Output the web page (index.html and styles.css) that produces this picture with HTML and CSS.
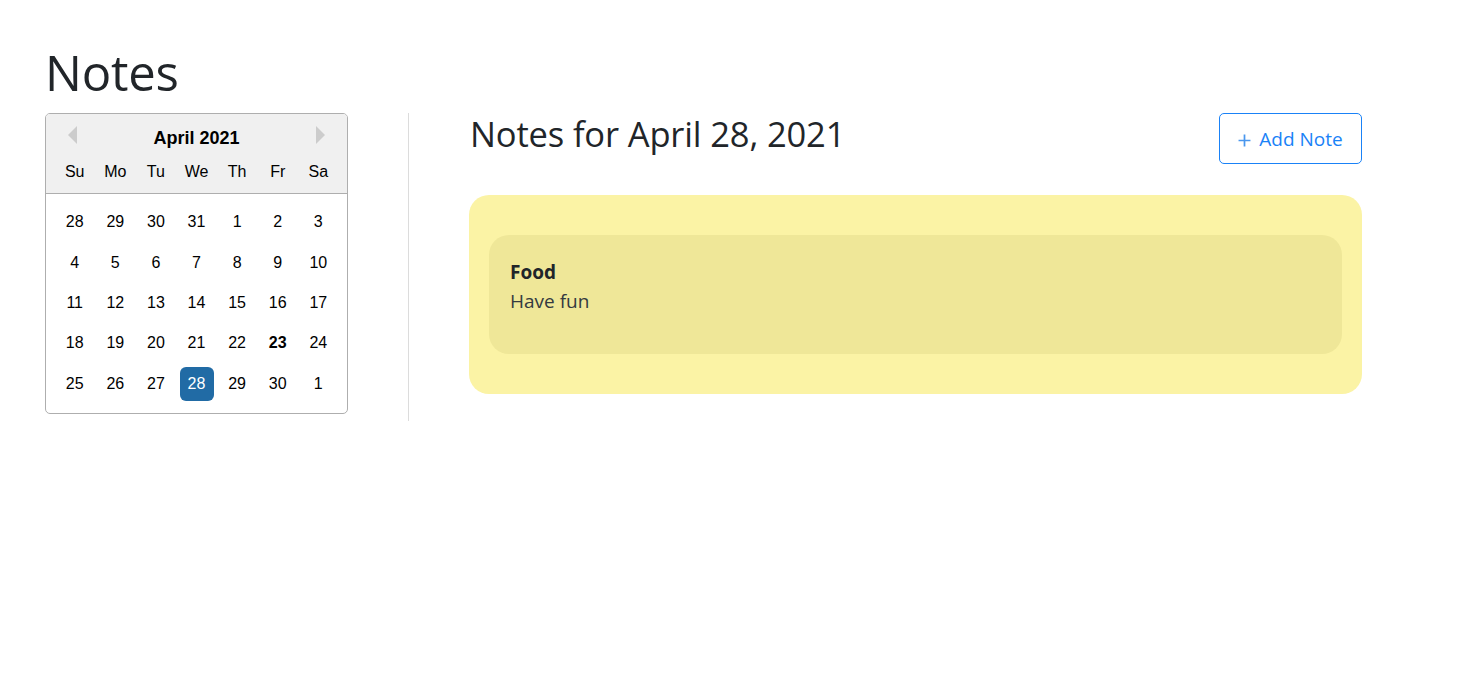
FILE: index.html
```html
<!DOCTYPE html>
<html lang="en">
<head>
<meta charset="utf-8">
<title>Notes</title>
<link rel="stylesheet" href="styles.css">
</head>
<body>
<div class="page">
  <h1 class="title">Notes</h1>
  <div class="layout">
    <div class="side">
      <div class="datepicker">
        <div class="dp-header">
          <div class="dp-nav">
            <span class="arrow arrow-left"></span>
            <span class="dp-month">April 2021</span>
            <span class="arrow arrow-right"></span>
          </div>
          <div class="dp-row dp-names">
            <span class="dp-cell">Su</span><span class="dp-cell">Mo</span><span class="dp-cell">Tu</span><span class="dp-cell">We</span><span class="dp-cell">Th</span><span class="dp-cell">Fr</span><span class="dp-cell">Sa</span>
          </div>
        </div>
        <div class="dp-body">
          <div class="dp-row"><span class="dp-cell">28</span><span class="dp-cell">29</span><span class="dp-cell">30</span><span class="dp-cell">31</span><span class="dp-cell">1</span><span class="dp-cell">2</span><span class="dp-cell">3</span></div>
          <div class="dp-row"><span class="dp-cell">4</span><span class="dp-cell">5</span><span class="dp-cell">6</span><span class="dp-cell">7</span><span class="dp-cell">8</span><span class="dp-cell">9</span><span class="dp-cell">10</span></div>
          <div class="dp-row"><span class="dp-cell">11</span><span class="dp-cell">12</span><span class="dp-cell">13</span><span class="dp-cell">14</span><span class="dp-cell">15</span><span class="dp-cell">16</span><span class="dp-cell">17</span></div>
          <div class="dp-row"><span class="dp-cell">18</span><span class="dp-cell">19</span><span class="dp-cell">20</span><span class="dp-cell">21</span><span class="dp-cell">22</span><span class="dp-cell today">23</span><span class="dp-cell">24</span></div>
          <div class="dp-row"><span class="dp-cell">25</span><span class="dp-cell">26</span><span class="dp-cell">27</span><span class="dp-cell selected">28</span><span class="dp-cell">29</span><span class="dp-cell">30</span><span class="dp-cell">1</span></div>
        </div>
      </div>
    </div>
    <div class="divider"></div>
    <div class="main">
      <div class="main-head">
        <h3 class="day-title">Notes for April 28, 2021</h3>
        <button class="add-btn" type="button">
          <svg class="plus" viewBox="0 0 12 12" width="13" height="13" aria-hidden="true"><path d="M6 0.5V11.5M0.5 6H11.5" stroke="currentColor" stroke-width="1.6" fill="none"/></svg>
          <span>Add Note</span>
        </button>
      </div>
      <div class="notes-board">
        <div class="note">
          <div class="note-title">Food</div>
          <div class="note-text">Have fun</div>
        </div>
      </div>
    </div>
  </div>
</div>
</body>
</html>
```
FILE: styles.css
```css
* { box-sizing: border-box; }
html, body { margin: 0; padding: 0; background: #fff; }
body {
  font-family: "Open Sans", "Noto Sans", sans-serif;
  color: #212529;
  font-size: 20px;
}
.page {
  padding: 42px 0 0 45px;
  width: 1362px;
}
.title {
  margin: 0 0 11px 0;
  font-size: 49px;
  line-height: 60px;
  font-weight: 500;
  letter-spacing: -0.2px;
}
.layout {
  display: flex;
  align-items: flex-start;
}
.side { width: 303px; flex: none; }
.divider {
  flex: none;
  width: 1px;
  height: 308px;
  background: #dcdcdc;
  margin-left: 60px;
  margin-right: 60px;
}
.main { flex: 1; }

/* datepicker */
.datepicker {
  width: 303px;
  border: 1px solid #aeaeae;
  border-radius: 5px;
  overflow: hidden;
  font-family: "Liberation Sans", Arial, sans-serif;
  font-size: 16px;
  color: #000;
  background: #fff;
}
.dp-header {
  background: #f0f0f0;
  border-bottom: 1px solid #aeaeae;
  padding-top: 10px;
}
.dp-nav {
  position: relative;
  display: flex;
  justify-content: center;
  height: 28px;
  align-items: center;
}
.dp-month {
  font-weight: bold;
  font-size: 18px;
  line-height: 28px;
}
.arrow {
  position: absolute;
  top: 2px;
  width: 0;
  height: 0;
  border-top: 9.5px solid transparent;
  border-bottom: 9.5px solid transparent;
}
.arrow-left { left: 22px; border-right: 9px solid #ccc; }
.arrow-right { right: 22px; border-left: 9px solid #ccc; }
.dp-row {
  display: flex;
  justify-content: center;
  padding: 0 8px;
}
.dp-names { padding-top: 3px; padding-bottom: 4px; }
.dp-cell {
  width: 34px;
  height: 34px;
  line-height: 34px;
  margin: 0 3.3px;
  text-align: center;
  border-radius: 6px;
}
.dp-body { padding: 8px 0 9px; }
.dp-body .dp-cell { margin-top: 3.2px; margin-bottom: 3.2px; }
.today { font-weight: bold; }
.selected { background: #216ba5; color: #fff; }

/* main */
.main-head {
  display: flex;
  justify-content: space-between;
  align-items: flex-start;
  margin-bottom: 31px;
}
.day-title {
  margin: 0 0 0 1px;
  font-size: 34.5px;
  line-height: 42px;
  font-weight: 500;
  letter-spacing: -0.15px;
}
.add-btn {
  -webkit-appearance: none;
  appearance: none;
  display: flex;
  align-items: center;
  gap: 8px;
  height: 51px;
  width: 143px;
  justify-content: center;
  background: #fff;
  color: #1a82f7;
  border: 1px solid #1a82f7;
  border-radius: 5px;
  font-family: "Open Sans", "Noto Sans", sans-serif;
  font-size: 19px;
  padding: 0 12px 0 12px;
  cursor: pointer;
}
.plus { color: #4a97ee; margin-top: 3px; }
.notes-board {
  background: #fbf3a5;
  border-radius: 20px;
  padding: 40px 20px;
}
.note {
  background: #efe798;
  border-radius: 20px;
  padding: 23px 21px 0;
  height: 119px;
}
.note-title {
  font-weight: 700;
  font-size: 19px;
  line-height: 28px;
}
.note-text {
  font-size: 19px;
  line-height: 30px;
  color: #343a40;
}
```
